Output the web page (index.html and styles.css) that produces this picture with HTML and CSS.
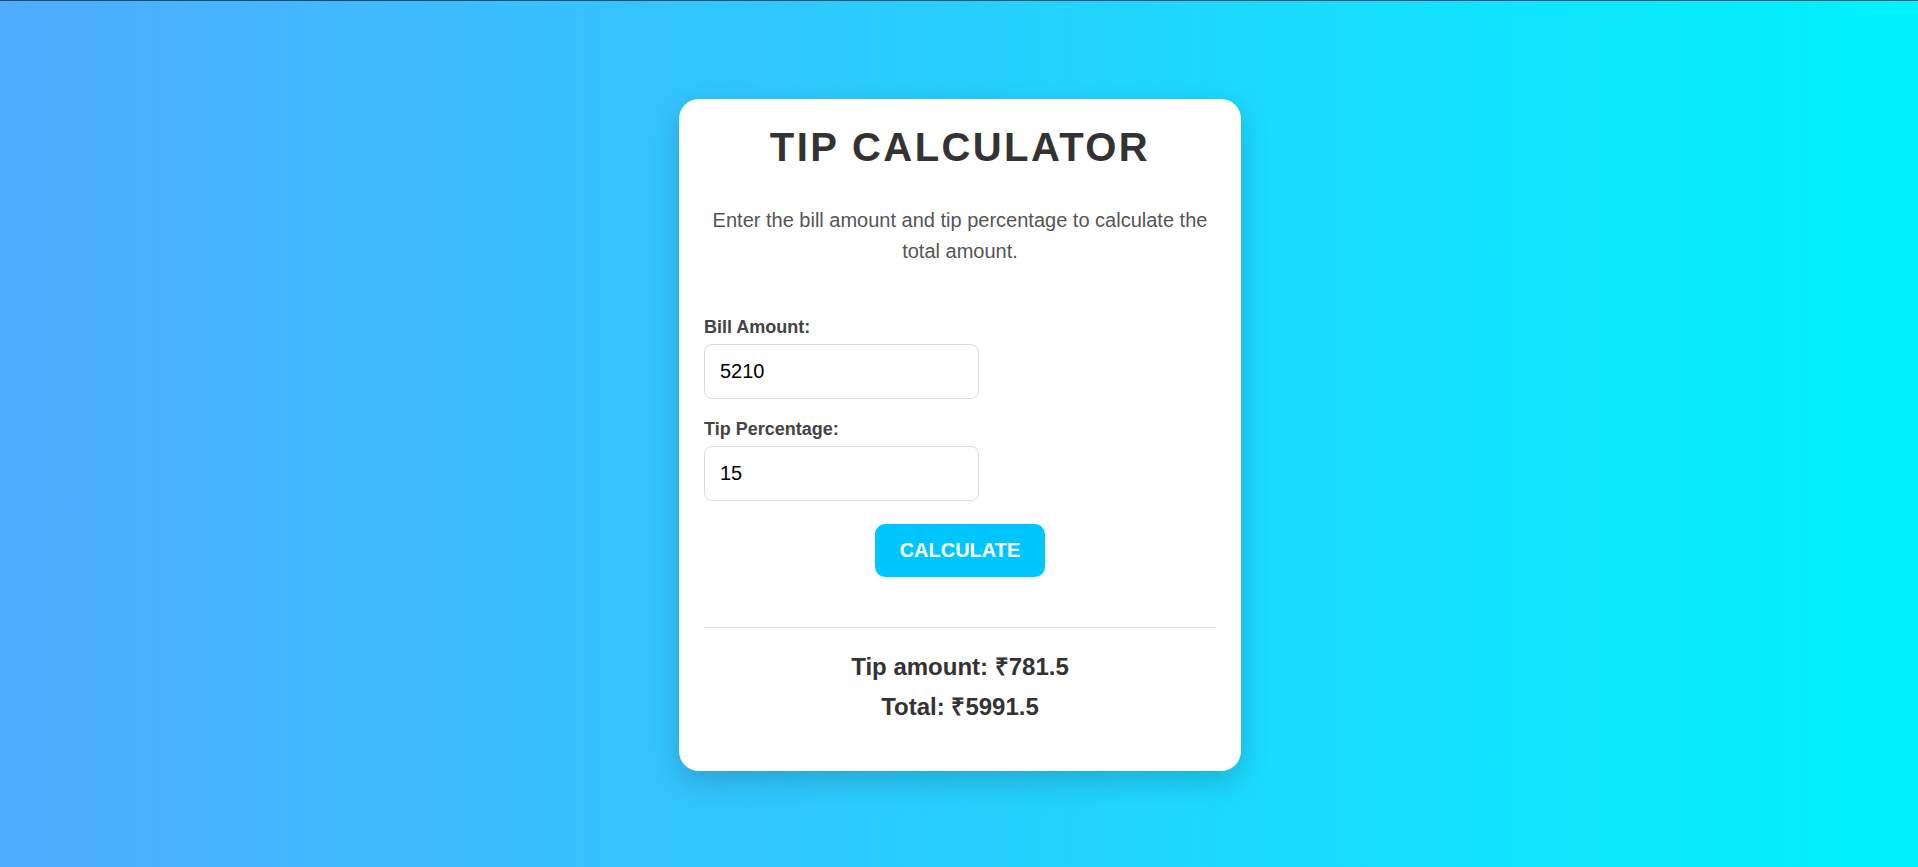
FILE: index.html
```html
<!DOCTYPE html>
<html lang="en">
<head>
<meta charset="UTF-8">
<title>Tip Calculator</title>
<link rel="stylesheet" href="styles.css">
</head>
<body>
  <div class="card">
    <h1 class="title">TIP CALCULATOR</h1>
    <p class="intro">Enter the bill amount and tip percentage to calculate the total amount.</p>
    <div class="field">
      <label class="label" for="bill">Bill Amount:</label>
      <input class="input" id="bill" type="text" value="5210">
    </div>
    <div class="field">
      <label class="label" for="tip">Tip Percentage:</label>
      <input class="input" id="tip" type="text" value="15">
    </div>
    <div class="actions">
      <button class="btn" type="button">CALCULATE</button>
    </div>
    <div class="result">
      <p class="result-line">Tip amount: ₹781.5</p>
      <p class="result-line">Total: ₹5991.5</p>
    </div>
  </div>
</body>
</html>
```

FILE: styles.css
```css
* { box-sizing: border-box; }

html, body {
  margin: 0;
  padding: 0;
}

body {
  height: 100vh;
  font-family: "Liberation Sans", Arial, sans-serif;
  background: linear-gradient(to right, #4facfe, #00f2fe);
  border-top: 1px solid rgba(20, 40, 60, 0.75);
  display: flex;
  align-items: center;
  justify-content: center;
  padding-top: 2px;
  padding-left: 2px;
}

.card {
  width: 562px;
  background: #fff;
  border-radius: 20px;
  padding: 25px;
  box-shadow: 0 10px 30px rgba(0, 0, 0, 0.18);
  display: flex;
  flex-direction: column;
}

.title {
  margin: 0 0 35px;
  text-align: center;
  font-size: 40px;
  font-weight: bold;
  letter-spacing: 2.4px;
  color: #333;
  line-height: 46px;
}

.intro {
  margin: 0 0 50px;
  text-align: center;
  font-size: 20px;
  line-height: 30.6px;
  color: #555;
}

.field {
  display: flex;
  flex-direction: column;
  align-items: flex-start;
  margin-bottom: 20px;
}

.label {
  font-size: 18px;
  font-weight: bold;
  color: #444;
  line-height: 20px;
  margin-bottom: 7px;
}

.input {
  width: 275px;
  height: 55px;
  padding: 0 15px;
  font-family: "Liberation Sans", Arial, sans-serif;
  font-size: 20px;
  color: #000;
  border: 1px solid #ddd;
  border-radius: 8px;
  background: #fff;
  outline: none;
}

.actions {
  display: flex;
  justify-content: center;
  margin-top: 3px;
  margin-bottom: 50px;
}

.btn {
  height: 53px;
  padding: 0 25px;
  font-family: "Liberation Sans", Arial, sans-serif;
  font-size: 20px;
  font-weight: bold;
  color: #fff;
  background: #00c6ff;
  border: none;
  border-radius: 10px;
}

.result {
  border-top: 1px solid #ddd;
  padding: 25px 0 25px;
  text-align: center;
}

.result-line {
  margin: 0 0 12px;
  font-size: 24px;
  font-weight: bold;
  color: #333;
  line-height: 28px;
}

.result-line:last-child {
  margin-bottom: 0;
}
```
